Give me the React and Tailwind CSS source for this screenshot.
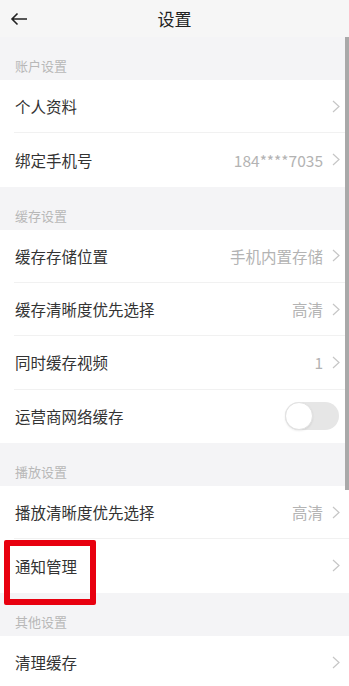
import React from "react";

const font = { fontFamily: '"Noto Sans CJK SC", "Noto Sans", sans-serif' };

function Chevron() {
  return (
    <svg width="8" height="13" viewBox="0 0 8 13" className="shrink-0">
      <polyline points="1,1 7,6.5 1,12" fill="none" stroke="#c6c6c6" strokeWidth="1.2" />
    </svg>
  );
}

function SectionLabel({ children }) {
  return (
    <div className="h-[43px] pl-[15px] pt-[20px] text-[13px] leading-[18px] text-[#b8b8b8]">
      {children}
    </div>
  );
}

function Row({ title, value, last, toggle, chevron = true }) {
  return (
    <div className="h-[53.33px] bg-white pl-[14px]">
      <div
        className={
          "flex h-full items-center pl-[1px] pr-[9px] " +
          (last ? "" : "border-b border-[#f1f1f1]")
        }
      >
        <span className="text-[15.5px] leading-[20px] text-[#333333]">{title}</span>
        <div className="ml-auto flex items-center gap-[9px]">
          {value && (
            <span className="text-[15.5px] leading-[20px] text-[#b3b3b3]">{value}</span>
          )}
          {toggle ? (
            <div className="mr-[1px] flex h-[28px] w-[54px] items-center rounded-full bg-[#e6e6e6]">
              <div className="h-[28px] w-[28px] rounded-full border border-[#e2e2e2] bg-white shadow-[0_1px_2px_rgba(0,0,0,0.08)]" />
            </div>
          ) : (
            chevron && <Chevron />
          )}
        </div>
      </div>
    </div>
  );
}

export default function App() {
  return (
    <div className="relative h-[686px] w-[349px] overflow-hidden bg-[#f4f4f6]" style={font}>
      <div className="relative flex h-[37px] items-center justify-center bg-[#f6f6f6]">
        <svg
          width="18"
          height="14"
          viewBox="0 0 18 14"
          className="absolute left-[10px] top-[12px]"
        >
          <path d="M17 7H2M7.5 1.5L2 7l5.5 5.5" fill="none" stroke="#222" strokeWidth="1.6" />
        </svg>
        <span className="text-[17px] leading-[22px] text-[#222222]">设置</span>
      </div>

      <SectionLabel>账户设置</SectionLabel>
      <Row title="个人资料" />
      <Row title="绑定手机号" value="184****7035" last />

      <SectionLabel>缓存设置</SectionLabel>
      <Row title="缓存存储位置" value="手机内置存储" />
      <Row title="缓存清晰度优先选择" value="高清" />
      <Row title="同时缓存视频" value="1" />
      <Row title="运营商网络缓存" toggle last />

      <SectionLabel>播放设置</SectionLabel>
      <Row title="播放清晰度优先选择" value="高清" />
      <Row title="通知管理" last />

      <SectionLabel>其他设置</SectionLabel>
      <Row title="清理缓存" last />

      <div className="absolute right-0 top-[37px] h-[453px] w-[4px] bg-[#a9a9a9]" />
      <div className="absolute left-[4px] top-[540px] h-[65px] w-[92px] rounded-[2px] border-[6px] border-[#e8000f]" />
    </div>
  );
}
